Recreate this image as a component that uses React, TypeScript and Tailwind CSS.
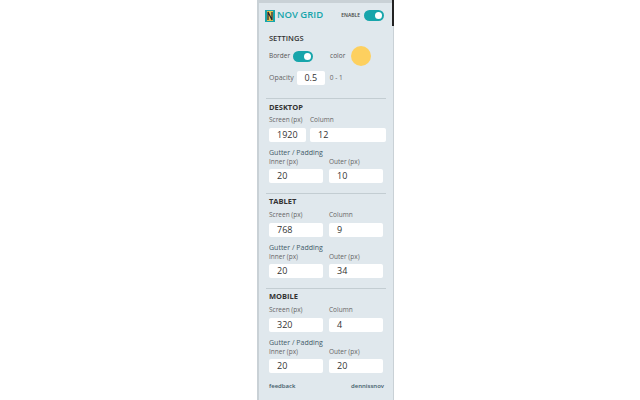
import React from 'react';

const Num = ({ value, className = 'w-[54px]' }: { value: string; className?: string }) => (
  <div className={`h-[14px] bg-white rounded-[2px] pl-[8px] text-[9px] leading-[14px] text-[#333] ${className}`}>{value}</div>
);

const Toggle = ({ className = '' }: { className?: string }) => (
  <div className={`w-[20px] h-[11px] rounded-full bg-[#17a5ab] flex items-center justify-end pr-[2px] ${className}`}>
    <div className="w-[7px] h-[7px] rounded-full bg-white" />
  </div>
);

const Label = ({ children, className = '' }: { children: React.ReactNode; className?: string }) => (
  <div className={`text-[6.5px] leading-[10px] text-[#666] whitespace-nowrap ${className}`}>{children}</div>
);

const Logo = () => (
  <svg width="10" height="12" viewBox="0 0 10 12">
    <rect width="10" height="12" fill="#17a5ab" />
    <rect x="2" y="1" width="6" height="10" fill="#e5c24e" />
    <path d="M3 10V2l4 8V2" stroke="#223" strokeWidth="1.2" fill="none" />
  </svg>
);

const Section = ({ title, screen, column, inner, outer, wide = false }: { title: string; screen: string; column: string; inner: string; outer: string; wide?: boolean }) => (
  <div className="pl-[10px]">
    <div className="text-[7.5px] leading-[10px] font-bold text-[#333]">{title}</div>
    {wide ? (
      <div className="flex gap-[4px] mt-[3px]">
        <div>
          <Label>Screen (px)</Label>
          <Num value={screen} className="w-[37px] mt-[3px]" />
        </div>
        <div>
          <Label>Column</Label>
          <Num value={column} className="w-[76px] mt-[3px]" />
        </div>
      </div>
    ) : (
      <div className="flex gap-[6px] mt-[4px]">
        <div>
          <Label>Screen (px)</Label>
          <Num value={screen} className="w-[54px] mt-[3px]" />
        </div>
        <div>
          <Label>Column</Label>
          <Num value={column} className="w-[54px] mt-[3px]" />
        </div>
      </div>
    )}
    <div className="text-[7px] leading-[10px] text-[#3f5a68] font-medium mt-[6px]">Gutter / Padding</div>
    <div className="flex gap-[6px] -mt-[1px]">
      <div>
        <Label>Inner (px)</Label>
        <Num value={inner} className="w-[54px] mt-[2px]" />
      </div>
      <div>
        <Label>Outer (px)</Label>
        <Num value={outer} className="w-[54px] mt-[2px]" />
      </div>
    </div>
  </div>
);

const Divider = () => <div className="h-px bg-[#c3cdd2] mx-[7px]" />;

export default function App() {
  return (
    <div className="w-[640px] h-[400px] bg-white overflow-hidden pl-[257px] font-['Open_Sans',sans-serif]">
      <div className="w-[137px] h-[400px] relative border-l-2 border-r border-[#c9d1d6] bg-[#e0e8ed]">
        <div className="absolute -right-px top-0 w-[2px] h-[26px] bg-[#222]" />
        <div className="h-[3px] bg-[#c9d1d6]" />
        <div className="flex items-center h-[25px] pl-[6px] pr-[9px]">
          <Logo />
          <span className="ml-[2px] text-[9.5px] font-semibold text-[#17a5ab] whitespace-nowrap">NOV GRID</span>
          <span className="ml-auto text-[5px] font-semibold text-[#444]">ENABLE</span>
          <Toggle className="ml-[4px]" />
        </div>
        <div className="pl-[10px]">
          <div className="text-[7.5px] leading-[10px] font-semibold text-[#333] mt-[5px]">SETTINGS</div>
          <div className="flex items-center mt-[1px] h-[24px]">
            <span className="text-[6.5px] text-[#555]">Border</span>
            <Toggle className="ml-[3px]" />
            <span className="text-[6.5px] text-[#555] ml-[17px]">color</span>
            <div className="w-[20px] h-[20px] rounded-full bg-[#fdd05f] ml-[6px]" />
          </div>
          <div className="flex items-center mt-[3px] h-[14px]">
            <span className="text-[7px] text-[#666]">Opacity</span>
            <div className="w-[28px] h-[14px] bg-white rounded-[2px] ml-[3px] text-[9px] leading-[14px] text-center text-[#333]">0.5</div>
            <span className="text-[6.5px] text-[#666] ml-[5px]">0 - 1</span>
          </div>
        </div>
        <div className="mt-[13px]"><Divider /></div>
        <div className="mt-[3px]"><Section title="DESKTOP" screen="1920" column="12" inner="20" outer="10" wide /></div>
        <div className="mt-[10px]"><Divider /></div>
        <div className="mt-[2px]"><Section title="TABLET" screen="768" column="9" inner="20" outer="34" /></div>
        <div className="mt-[10px]"><Divider /></div>
        <div className="mt-[2px]"><Section title="MOBILE" screen="320" column="4" inner="20" outer="20" /></div>
        <div className="flex justify-between pl-[10px] pr-[9px] mt-[9px] text-[6px] font-semibold text-[#3f5a68]">
          <span>feedback</span>
          <span>dennissnov</span>
        </div>
      </div>
    </div>
  );
}
